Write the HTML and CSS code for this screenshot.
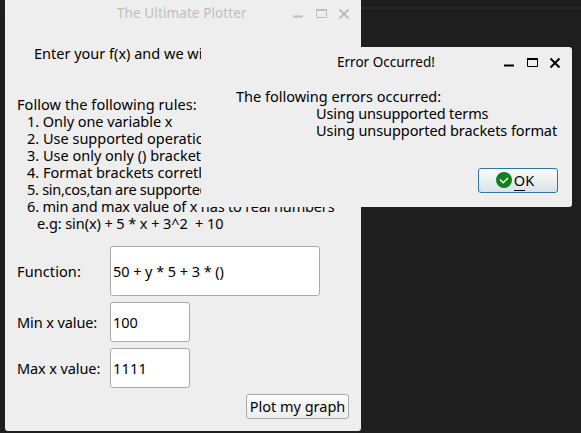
FILE: index.html
```
<!DOCTYPE html>
<html lang="en">
<head>
<meta charset="utf-8">
<title>The Ultimate Plotter</title>
<link rel="stylesheet" href="styles.css">
</head>
<body>
<main class="desktop">
  <section class="window plotter">
    <header class="titlebar">
      <h1 class="title"><span class="t-main">The Ultimate Plotter</span></h1>
      <svg class="controls" width="60" height="14" viewBox="0 0 60 14"><path d="M1 10.5h10" stroke-width="2"/><path d="M24.5 4v7.5h10V4" stroke-width="1"/><path d="M24 4h11" stroke-width="2"/><path d="M47.5 3.5l9 9m0-9l-9 9" stroke-width="2"/></svg>
    </header>
    <p class="intro"><span class="t-intro">Enter your f(x) and we will plot it</span></p>
    <div class="rules">
      <p class="t-rules">Follow the following rules:</p>
      <ol>
        <li class="t-r1">1. Only one variable x</li>
        <li class="t-r2">2. Use supported operations</li>
        <li class="t-r3">3. Use only only () brackets</li>
        <li class="t-r4">4. Format brackets corretly</li>
        <li class="t-r5">5. sin,cos,tan are supported</li>
        <li class="t-r6">6. min and max value of x has to real numbers</li>
        <li class="example t-eg">e.g: sin(x) + 5 * x + 3^2&nbsp; + 10</li>
      </ol>
    </div>
    <div class="form">
      <span class="t-fn">Function:</span><div class="field large"><span class="t-val">50 + y * 5 + 3 * ()</span></div>
      <span class="t-min">Min x value:</span><div class="field"><span class="t-100">100</span></div>
      <span class="t-max">Max x value:</span><div class="field"><span class="t-1111">1111</span></div>
    </div>
    <div class="actions"><button class="button"><span class="t-plot">Plot my graph</span></button></div>
  </section>

  <section class="window dialog">
    <header class="titlebar">
      <h2 class="title"><span class="t-error">Error Occurred!</span></h2>
      <svg class="controls" width="60" height="14" viewBox="0 0 60 14"><path d="M1 10.5h10" stroke-width="2"/><path d="M24.5 4v7.5h10V4" stroke-width="1"/><path d="M24 4h11" stroke-width="2"/><path d="M47.5 3.5l9 9m0-9l-9 9" stroke-width="2"/></svg>
    </header>
    <div class="message">
      <p class="t-m1">The following errors occurred:</p>
      <p class="detail t-m2">Using unsupported terms</p>
      <p class="detail t-m3">Using unsupported brackets format</p>
    </div>
    <div class="actions"><button class="button ok"><svg width="16" height="16" viewBox="0 0 16 16"><circle cx="8" cy="8" r="8" fill="#118021"/><path d="M4 7.5l3.2 3.2L12 6" fill="none" stroke="#fff" stroke-width="1.4"/></svg><span class="t-ok"><span class="key">O</span>K</span></button></div>
  </section>
</main>
</body>
</html>
```
FILE: styles.css
```
* { box-sizing: border-box; }
body { margin: 0; font: 14.5px/17px "Noto Sans", sans-serif; color: #000; }
p, h1, h2, ol { margin: 0; padding: 0; font: inherit; list-style: none; }
.desktop { position: relative; width: 581px; height: 433px; overflow: hidden; background: linear-gradient(#1e1e1e 7px, #272727 7px, #272727 9px, #1e1e1e 9px); }
.window { position: absolute; background: #eee; display: flex; flex-direction: column; white-space: nowrap; }
.plotter { left: 5px; top: 0; width: 356px; height: 431px; border-radius: 0 0 3px 3px; padding: 0 12px; }
.dialog { left: 201px; top: 47px; width: 371px; height: 160px; border-radius: 0 3px 3px 0; padding: 0 14px 0 35px; }
.titlebar { display: flex; align-items: center; height: 26px; font-size: 13.5px; }
.title { flex: 1; }
.controls { flex: none; fill: none; stroke: #000; }
.plotter .titlebar { color: #bebebe; padding-left: 100px; }
.plotter .controls { stroke: #bebebe; margin-right: -3px; }
.dialog .titlebar { height: 30px; padding-left: 101px; }
.dialog .controls { margin-right: -5px; }
.intro { padding: 19px 0 0 17px; }
.rules { margin-top: 34px; }
.rules ol { padding-left: 10px; }
.rules .example { padding-left: 10px; }
.form { display: grid; grid-template-columns: 93px 210px; grid-template-rows: 50px 40px 40px; row-gap: 6px; align-items: center; margin-top: 14px; }
.field { width: 80px; height: 40px; display: flex; align-items: center; padding-left: 2px; background: #fff; border: 1px solid #aaa; border-radius: 3px; }
.field.large { width: 210px; height: 50px; }
.actions { display: flex; justify-content: flex-end; }
.button { width: 103px; height: 25px; padding: 0; border: 1px solid #aaa; border-radius: 3px; background: linear-gradient(#fdfdfd, #ededed); font: inherit; color: inherit; display: flex; align-items: center; justify-content: center; }
.plotter .actions { margin-top: 6px; }
.message { margin-top: 11px; }
.detail { padding-left: 80px; }
.dialog .actions { margin-top: 29px; }
.ok { width: 80px; padding-right: 6px; border-color: #2b76a5; background: linear-gradient(#fcfdfd, #d9e1e8); gap: 2px; }
.ok svg { margin-bottom: 1px; }
.key { border-bottom: 1px solid #000; }
.t-main { letter-spacing: .1px; }
.t-rules { letter-spacing: .07px; }
.t-r1 { letter-spacing: -.05px; }
.t-r5 { letter-spacing: -.27px; }
.t-r6 { letter-spacing: -.16px; }
.t-eg { letter-spacing: -.08px; }
.t-fn { letter-spacing: .1px; }
.t-val { letter-spacing: -.06px; }
.t-min, .t-max { letter-spacing: -.1px; }
.t-1111 { letter-spacing: .2px; }
.t-m2 { letter-spacing: -.13px; }
.t-m3 { letter-spacing: -.08px; }
```
